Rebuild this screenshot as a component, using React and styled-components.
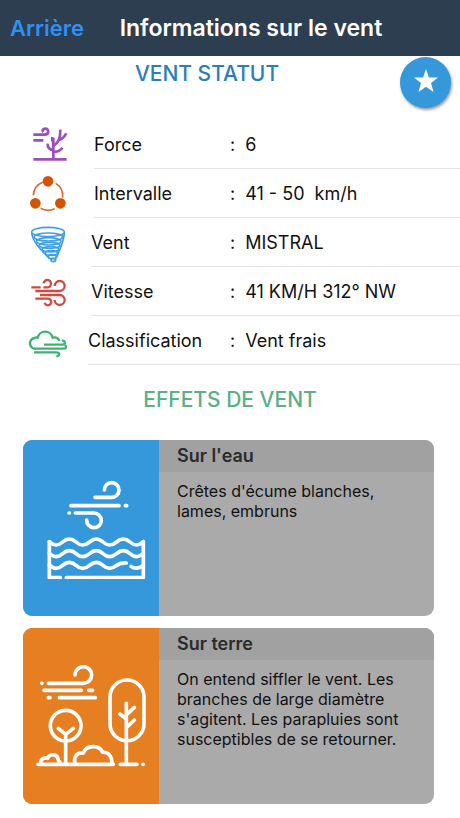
import React from 'react';
import styled, { createGlobalStyle } from 'styled-components';

const GlobalStyle = createGlobalStyle`
  * {
    box-sizing: border-box;
  }
  body {
    margin: 0;
    background-color: #fff;
    color: #111;
    font-family: Inter, Roboto, 'Liberation Sans', sans-serif;
  }
`;

const Header = styled.header`
  display: flex;
  align-items: center;
  height: 56px;
  padding: 0 42px 0 10px;
  background-color: #2e3e51;
`;

const BackButton = styled.button`
  padding: 0;
  border: 0;
  background: none;
  color: #2f8ff5;
  font: inherit;
  font-size: 22px;
  font-weight: 600;
  cursor: pointer;
`;

const Title = styled.h1`
  flex: 1;
  margin: 0;
  color: #fff;
  font-size: 23px;
  font-weight: 600;
  text-align: center;
`;

const Page = styled.main`
  position: relative;
`;

const Heading = styled.h2`
  margin: 0;
  padding-right: ${({ $shift }) => $shift || 0}px;
  color: ${({ $color }) => $color};
  font-size: 21px;
  font-weight: 500;
  line-height: 36px;
  text-align: center;
`;

const StarButton = styled.button`
  position: absolute;
  top: 1px;
  right: 9px;
  display: flex;
  align-items: center;
  justify-content: center;
  width: 51px;
  height: 51px;
  padding: 0 0 4px;
  border: 0;
  border-radius: 50%;
  background-color: #3498db;
  box-shadow: 1px 2px 3px rgba(0, 0, 0, 0.4);
  cursor: pointer;
`;

const List = styled.ul`
  margin: 28px 0 17px;
  padding: 0;
  list-style: none;
`;

const Row = styled.li`
  display: flex;
  height: 49px;
  padding-left: 28px;
`;

const RowIcon = styled.svg`
  flex: none;
  align-self: center;
  width: 40px;
  height: 40px;
  fill: none;
  stroke: ${({ $color }) => $color};
  stroke-width: ${({ $line }) => $line};
`;

const RowBody = styled.div`
  display: flex;
  flex: 1;
  align-items: center;
  margin-left: ${({ $gap }) => $gap}px;
  border-bottom: 1px solid #e4e4e6;
  font-size: 18px;
`;

const Label = styled.span`
  flex: 1;
`;

const Value = styled.span`
  display: flex;
  gap: 10px;
  width: 50vw;
  white-space: pre;
`;

const Cards = styled.div`
  display: flex;
  flex-direction: column;
  gap: 12px;
  padding: 22px 26px 14px 23px;
`;

const Card = styled.article`
  display: flex;
  min-height: 176px;
  overflow: hidden;
  border-radius: 9px;
  background-color: #aaa;
`;

const CardPicture = styled.div`
  display: flex;
  flex: none;
  align-items: center;
  justify-content: center;
  width: 136px;
  background-color: ${({ $color }) => $color};
`;

const Drawing = styled.svg`
  width: 110px;
  height: 102px;
  fill: none;
  stroke: #fff;
  stroke-width: 11;
  stroke-linecap: round;
  stroke-linejoin: round;
`;

const CardContent = styled.div`
  flex: 1;
`;

const CardTitle = styled.h3`
  margin: 0;
  padding: 0 18px;
  background-color: #a1a1a1;
  color: #2b2b2b;
  font-size: 18px;
  font-weight: 600;
  line-height: 32px;
`;

const CardText = styled.p`
  margin: 0;
  padding: 9px 26px 9px 18px;
  font-size: 16px;
  line-height: 20px;
`;

const icons = {
  force: (
    <>
      <path d="M16 103H116M76 103V38" />
      <path d="M77 76C64 74 58 68 59 56M76 62C90 56 98 44 97 14M92 46C102 42 110 34 115 25M76 80C88 81 98 77 103 68M76 52C72 48 72 42 73 36" />
      <path d="M16 29H50C64 29 64 11 52 11C44 11 41 17 46 21M16 46H46" />
    </>
  ),
  interval: (
    <>
      <path d="M16 64A45 45 0 0 1 44 25M83 28A45 45 0 0 1 104 71M38 103A45 45 0 0 0 80 104" />
      <g fill="#d35400" stroke="none">
        <circle cx="60" cy="22" r="16" />
        <circle cx="22" cy="88" r="16" />
        <circle cx="97" cy="88" r="16" />
      </g>
    </>
  ),
  tornado: (
    <>
      <ellipse cx="60" cy="27" rx="49" ry="14" />
      <ellipse cx="61" cy="42" rx="43" ry="12" />
      <ellipse cx="62" cy="55" rx="37" ry="11" />
      <ellipse cx="65" cy="67" rx="31" ry="9" />
      <ellipse cx="67" cy="79" rx="25" ry="8" />
      <ellipse cx="70" cy="90" rx="18" ry="7" />
      <ellipse cx="73" cy="101" rx="12" ry="6" />
      <ellipse cx="76" cy="111" rx="7" ry="5" />
      <path d="M11 30C14 54 34 76 64 106M109 30C108 56 96 80 84 106" />
    </>
  ),
  wind: (
    <>
      <path d="M10 46H38M46 46H57A11 11 0 1 0 47 34" />
      <path d="M22 57H95A15 15 0 1 0 80 42" />
      <path d="M36 69H95A15 15 0 1 1 80 84" />
      <path d="M22 80H58A10 10 0 1 1 50 92" />
    </>
  ),
  cloud: (
    <>
      <path d="M84 83H24A16 16 0 0 1 20 51C23 49 26 49 29 50A23 23 0 0 1 74 50C84 47 92 52 94 60" />
      <path d="M48 71H104C114 70 112 57 102 59M84 83H108C118 82 114 72 109 74" />
      <path d="M18 94H86C97 95 95 107 85 105" />
    </>
  ),
};

const rows = [
  { label: 'Force', value: '6', icon: 'force', color: '#9b4fbf', line: 8, gap: 26 },
  { label: 'Intervalle', value: '41 - 50  km/h', icon: 'interval', color: '#d9692a', line: 5, gap: 26 },
  { label: 'Vent', value: 'MISTRAL', icon: 'tornado', color: '#3f9fe0', line: 5, gap: 23 },
  { label: 'Vitesse', value: '41 KM/H 312° NW', icon: 'wind', color: '#cf4a40', line: 7, gap: 23 },
  { label: 'Classification', value: 'Vent frais', icon: 'cloud', color: '#3cb371', line: 7, gap: 20 },
];

const WaterDrawing = () => (
  <Drawing viewBox="-31 -11 330 306" aria-hidden="true">
    <path d="M146 50H196A22 22 0 1 0 174 28M74 75H218M237 75H241M68 97H69M87 97H143A22 22 0 1 1 121 118" />
    <path d="M9 183C16 188 20 193 29 193C49 193 49 175 69 175S89 193 109 193S130 175 150 175S170 193 190 193S211 175 231 175S251 193 271 193C280 193 284 188 291 183" />
    <path d="M9 218C16 223 20 228 29 228C49 228 49 210 69 210S89 228 109 228S130 210 150 210S170 228 190 228S211 210 231 210S251 228 271 228C280 228 284 223 291 218" />
    <path d="M9 253C16 258 20 263 29 263C49 263 49 245 69 245S89 263 109 263S130 245 150 245S170 263 190 263S211 243 240 247M254 257C264 265 280 265 291 253" />
    <path d="M42 291H9V183M60 291H291V183" />
  </Drawing>
);

const LandDrawing = () => (
  <Drawing viewBox="0 0 330 306" aria-hidden="true">
    <path d="M17 55H18M37 55H142A25 25 0 1 0 117 30M24 76H136M158 76H170M37 98H42M70 98H178" />
    <circle cx="89" cy="182" r="46" />
    <path d="M89 298V208L67 190M89 208L112 190" />
    <rect x="222" y="45" width="102" height="182" rx="51" />
    <path d="M271 298V115M252 147L271 162M295 127L271 150M295 165L271 188" />
    <path d="M14 294C14 281 26 276 35 280C42 264 66 266 67 286L72 292" />
    <path d="M117 294C112 276 122 262 142 264C150 240 190 238 200 262C216 260 228 274 228 294" />
    <path d="M6 298H232M253 298H303M321 298H322" />
  </Drawing>
);

const InfoRow = ({ label, value, icon, color, line, gap }) => (
  <Row>
    <RowIcon viewBox="0 0 120 120" $color={color} $line={line} aria-hidden="true">
      {icons[icon]}
    </RowIcon>
    <RowBody $gap={gap}>
      <Label>{label}</Label>
      <Value>
        <span>:</span>
        <span>{value}</span>
      </Value>
    </RowBody>
  </Row>
);

const EffectCard = ({ title, color, drawing, children }) => (
  <Card>
    <CardPicture $color={color}>{drawing}</CardPicture>
    <CardContent>
      <CardTitle>{title}</CardTitle>
      <CardText>{children}</CardText>
    </CardContent>
  </Card>
);

class App extends React.PureComponent {
  render() {
    return (
      <>
        <GlobalStyle />
        <Header>
          <BackButton type="button">Arrière</BackButton>
          <Title>Informations sur le vent</Title>
        </Header>
        <Page>
          <Heading $color="#2980b9" $shift={46}>VENT STATUT</Heading>
          <StarButton type="button" aria-label="Favori">
            <svg width="26" height="26" viewBox="0 0 26 26" fill="#fff" aria-hidden="true">
              <path d="M13 1L15.900 9.500H25L18 15L20.500 24L13 18.800L5.500 24L8 15L1 9.500H10.100Z" />
            </svg>
          </StarButton>
          <List>
            {rows.map((row) => (
              <InfoRow key={row.label} {...row} />
            ))}
          </List>
          <Heading $color="#5bb085">EFFETS DE VENT</Heading>
          <Cards>
            <EffectCard title="Sur l'eau" color="#3498db" drawing={<WaterDrawing />}>
              Crêtes d'écume blanches, lames, embruns
            </EffectCard>
            <EffectCard title="Sur terre" color="#e67e22" drawing={<LandDrawing />}>
              On entend siffler le vent. Les branches de large diamètre s'agitent. Les parapluies sont
              susceptibles de se retourner.
            </EffectCard>
          </Cards>
        </Page>
      </>
    );
  }
}

export default App;
